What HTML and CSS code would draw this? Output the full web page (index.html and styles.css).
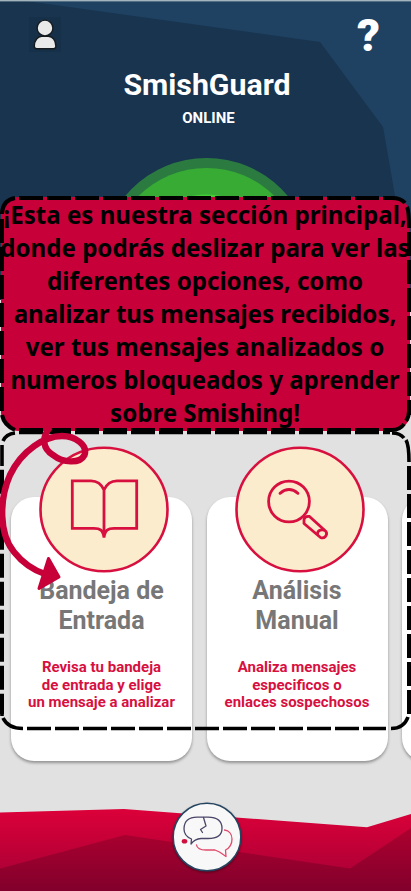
FILE: index.html
```html
<!DOCTYPE html>
<html lang="es">
<head>
<meta charset="utf-8">
<meta name="viewport" content="width=device-width, initial-scale=1">
<title>SmishGuard</title>
<link rel="stylesheet" href="styles.css">
</head>
<body>
<div class="app">
  <header class="hero">
    <svg class="hero-bg" viewBox="0 0 411 300" aria-hidden="true">
      <rect width="411" height="300" fill="#1f4162"/>
      <path d="M0 1H26L320 42L383 127L395 196L400 300H0Z" fill="#18344f"/>
      <rect width="411" height="1.4" fill="#a4b4bd"/>
      <circle cx="206.5" cy="264" r="106" fill="#2b7b40"/>
      <circle cx="206.5" cy="264.5" r="96.5" fill="#37ab34"/>
      <circle cx="206.5" cy="264.5" r="70" fill="#43cc36"/>
    </svg>
    <div class="toolbar">
      <svg class="user" viewBox="0 0 32 35" role="img" aria-label="Perfil">
        <rect width="32" height="35" fill="#173049"/>
        <path d="M5.3 29.3C5.3 23 9 19.5 12.600 19.300H19.400C23.500 19.500 26.900 23 26.900 29.300Q26.900 31.700 24.500 31.700H7.700Q5.300 31.700 5.300 29.300Z" fill="#e9e9e9" stroke="#151a1f" stroke-width="1.4"/>
        <circle cx="16" cy="11" r="7.900" fill="#e9e9e9" stroke="#151a1f" stroke-width="1.4"/>
      </svg>
      <span class="help">?</span>
    </div>
    <h1>SmishGuard</h1>
    <p class="status">ONLINE</p>
  </header>

  <main class="cards">
    <article class="card">
      <div class="disc">
        <svg viewBox="0 0 130 127" aria-hidden="true">
          <ellipse cx="65" cy="63.500" rx="63.500" ry="61.700" fill="#fcecce" stroke="#d7103f" stroke-width="2.600"/>
          <path d="M65 75V44C62 37 58 34.800 52 34.800H33.300V82.300H55C61 82.300 64 84 65 91.500C66 84 69 82.300 75 82.300H97.700V34.800H78C72 34.800 68 37 65 44V91.500" fill="none" stroke="#d7103f" stroke-width="2.800"/>
        </svg>
      </div>
      <h2>Bandeja de<br>Entrada</h2>
      <p>Revisa tu bandeja<br>de entrada y elige<br>un mensaje a analizar</p>
    </article>
    <article class="card">
      <div class="disc">
        <svg viewBox="0 0 130 127" aria-hidden="true">
          <ellipse cx="65" cy="63.500" rx="63.500" ry="61.700" fill="#fcecce" stroke="#d7103f" stroke-width="2.600"/>
          <g fill="none" stroke="#d7103f" stroke-width="2.800" stroke-linecap="round" stroke-linejoin="round">
            <circle cx="54" cy="55.500" r="20.400"/>
            <path d="M45 47.300Q54 39.800 63 47.300"/>
            <path d="M69 73.500Q70 69.800 74.500 70.500L91 85.500A4.300 4.300 0 0 1 85.500 91.500L69 77.500Z"/>
            <path d="M82.500 88Q82.500 83.500 88.500 84"/>
          </g>
        </svg>
      </div>
      <h2>Análisis<br>Manual</h2>
      <p>Analiza mensajes<br>especificos o<br>enlaces sospechosos</p>
    </article>
    <article class="card"></article>
  </main>

  <footer class="bottom">
    <svg class="waves" viewBox="0 0 411 91" aria-hidden="true">
      <defs>
        <linearGradient id="red" gradientUnits="userSpaceOnUse" x1="0" y1="9" x2="0" y2="70"><stop stop-color="#dc0039"/><stop offset="1" stop-color="#b00036"/></linearGradient>
        <linearGradient id="wine" gradientUnits="userSpaceOnUse" x1="0" y1="30" x2="0" y2="91"><stop stop-color="#ac002f"/><stop offset="1" stop-color="#82002c"/></linearGradient>
      </defs>
      <path d="M0 12.500L124 9L367 27.300L411 14V91H0Z" fill="url(#red)"/>
      <path d="M0 68.500L125 35L350 68.500L411 28V91H0Z" fill="url(#wine)"/>
    </svg>
    <svg class="logo" viewBox="0 0 70 70" role="img" aria-label="SmishGuard">
      <circle cx="35" cy="35" r="33.800" fill="#f8f8f8" stroke="#254460" stroke-width="1.500"/>
      <g fill="none" stroke-width="1.300" stroke-linejoin="round" stroke-linecap="round">
        <path d="M19 42L19.500 37C14.500 35 12 31.500 12 27C12 19 17 15.200 25 15.200H36C45 15.200 50 19 50 26.500C50 33 45 36.500 36 36.500H29C24 36.800 21.500 38.500 19 42Z" stroke="#4a4668"/>
        <path d="M31.500 15.500L34 24L28.500 27.500L30.500 30.500" stroke="#4a4668"/>
        <path d="M52.500 28C57 28.500 60 32 60 37C60 43 57.500 46 53.500 48L54 54.500L47.500 50L43 48H34C28 48 25 46 24.500 43" stroke="#e14a6b"/>
      </g>
      <ellipse cx="12.500" cy="39.300" rx="2.800" ry="2.300" fill="#cf103f"/>
    </svg>
  </footer>

  <section class="guide">
    <p>¡Esta es nuestra sección principal,<br>donde podrás deslizar para ver las<br>diferentes opciones, como<br>analizar tus mensajes recibidos,<br>ver tus mensajes analizados o<br>numeros bloqueados y aprender<br>sobre Smishing!</p>
  </section>
  <svg class="marks" viewBox="0 0 411 891" aria-hidden="true">
    <g fill="none" stroke="#000" stroke-width="4">
      <path d="M19 198H392" stroke-dasharray="24 4"/>
      <path d="M2 219V411" stroke-dasharray="24 4"/>
      <path d="M409 232V415" stroke-dasharray="24 4"/>
      <path d="M19 430H392" stroke-dasharray="24 4"/>
      <path d="M2 214V213Q3 200 15 198M392 198Q401 198 405 203M407 207Q409 211 409 228M2 415Q4 425 15 430M392 430Q400 430 404 424M406 421Q409 417 409 411"/>
      <path d="M19 432.500H390" stroke-width="3.600" stroke-dasharray="24 4"/>
      <path d="M2 469.700V714" stroke-dasharray="24 4"/>
      <path d="M409 466V714" stroke-dasharray="24 4"/>
      <path d="M27 728.500H386" stroke-width="3.600" stroke-dasharray="24 4"/>
      <path d="M2 466V445M3 441Q6 434 15 433M392 433Q400 433 404 438M406 440Q409 445 409 462M2 713V716M3 718Q8 728.500 23 728.500M391 728.500Q404 728.500 408 717" stroke-width="3.600"/>
    </g>
    <path d="M50 427C41 438 43 449 53 455C63 463 80 464 84.500 455C88 445 75 436 62 436C45 436 22 450 10 475C-1 500 -1 534 14 552C22 562 33 570 45 574" fill="none" stroke="#c70039" stroke-width="6.400"/>
    <path d="M48.500 558.500L59 577L39 588.500Z" fill="#c70039" stroke="#c70039" stroke-width="3" stroke-linejoin="round"/>
  </svg>
</div>
</body>
</html>
```
FILE: styles.css
```css
* { box-sizing: border-box; }
body { margin: 0; font-family: Roboto, "Liberation Sans", sans-serif; }
h1, h2, p { margin: 0; }
.app {
  position: relative;
  display: flex;
  flex-direction: column;
  width: 411px;
  height: 891px;
  overflow: hidden;
  background: #e1e1e1;
}
.hero {
  position: relative;
  flex: none;
  height: 300px;
  text-align: center;
  color: #fff;
}
.hero-bg { position: absolute; inset: 0; width: 411px; height: 300px; }
.toolbar {
  position: relative;
  display: flex;
  justify-content: space-between;
  height: 66px;
  padding: 17px 31px 0 29px;
}
.user { width: 32px; height: 35px; }
.help { font-size: 45px; line-height: 38px; font-weight: 900; }
.hero h1 { position: relative; font-size: 30.300px; line-height: 37px; font-weight: 700; padding-left: 3px; }
.status { position: relative; font-size: 15px; line-height: 18px; font-weight: 700; margin-top: 6px; padding-left: 6px; }
.cards {
  display: flex;
  flex: none;
  gap: 14.500px;
  margin: 197px 0 0 11px;
}
.card {
  flex: none;
  width: 181px;
  height: 264px;
  border-radius: 23px;
  background: #fff;
  box-shadow: 0 2px 3px rgba(0, 0, 0, .35);
  text-align: center;
}
.disc { display: flex; justify-content: center; height: 76px; margin-top: -51px; padding-left: 5.600px; }
.disc svg { flex: none; width: 130px; height: 127px; }
.card h2 { margin-top: 54px; font-size: 25px; line-height: 29.500px; color: #777; }
.card p { margin-top: 24px; font-size: 15px; line-height: 17.600px; font-weight: 700; color: #d7103f; }
.bottom {
  position: relative;
  display: flex;
  justify-content: center;
  flex: none;
  height: 91px;
  margin-top: auto;
}
.waves { position: absolute; inset: 0; width: 411px; height: 91px; }
.logo { position: relative; width: 70px; height: 70px; margin: 2px 0 0 2px; filter: drop-shadow(0 1px 1px rgba(0, 0, 0, .4)); }
.guide {
  position: absolute;
  left: 1px;
  top: 197px;
  width: 409px;
  height: 234px;
  border-radius: 18px;
  background: #c70039;
  display: flex;
  justify-content: center;
}
.guide p {
  flex: none;
  font: 700 24.100px/33px "Noto Sans", "Open Sans", sans-serif;
  color: #000;
  text-align: center;
  white-space: nowrap;
  margin: 1px 1px 0 0;
}
.marks { position: absolute; inset: 0; width: 411px; height: 891px; }
```
